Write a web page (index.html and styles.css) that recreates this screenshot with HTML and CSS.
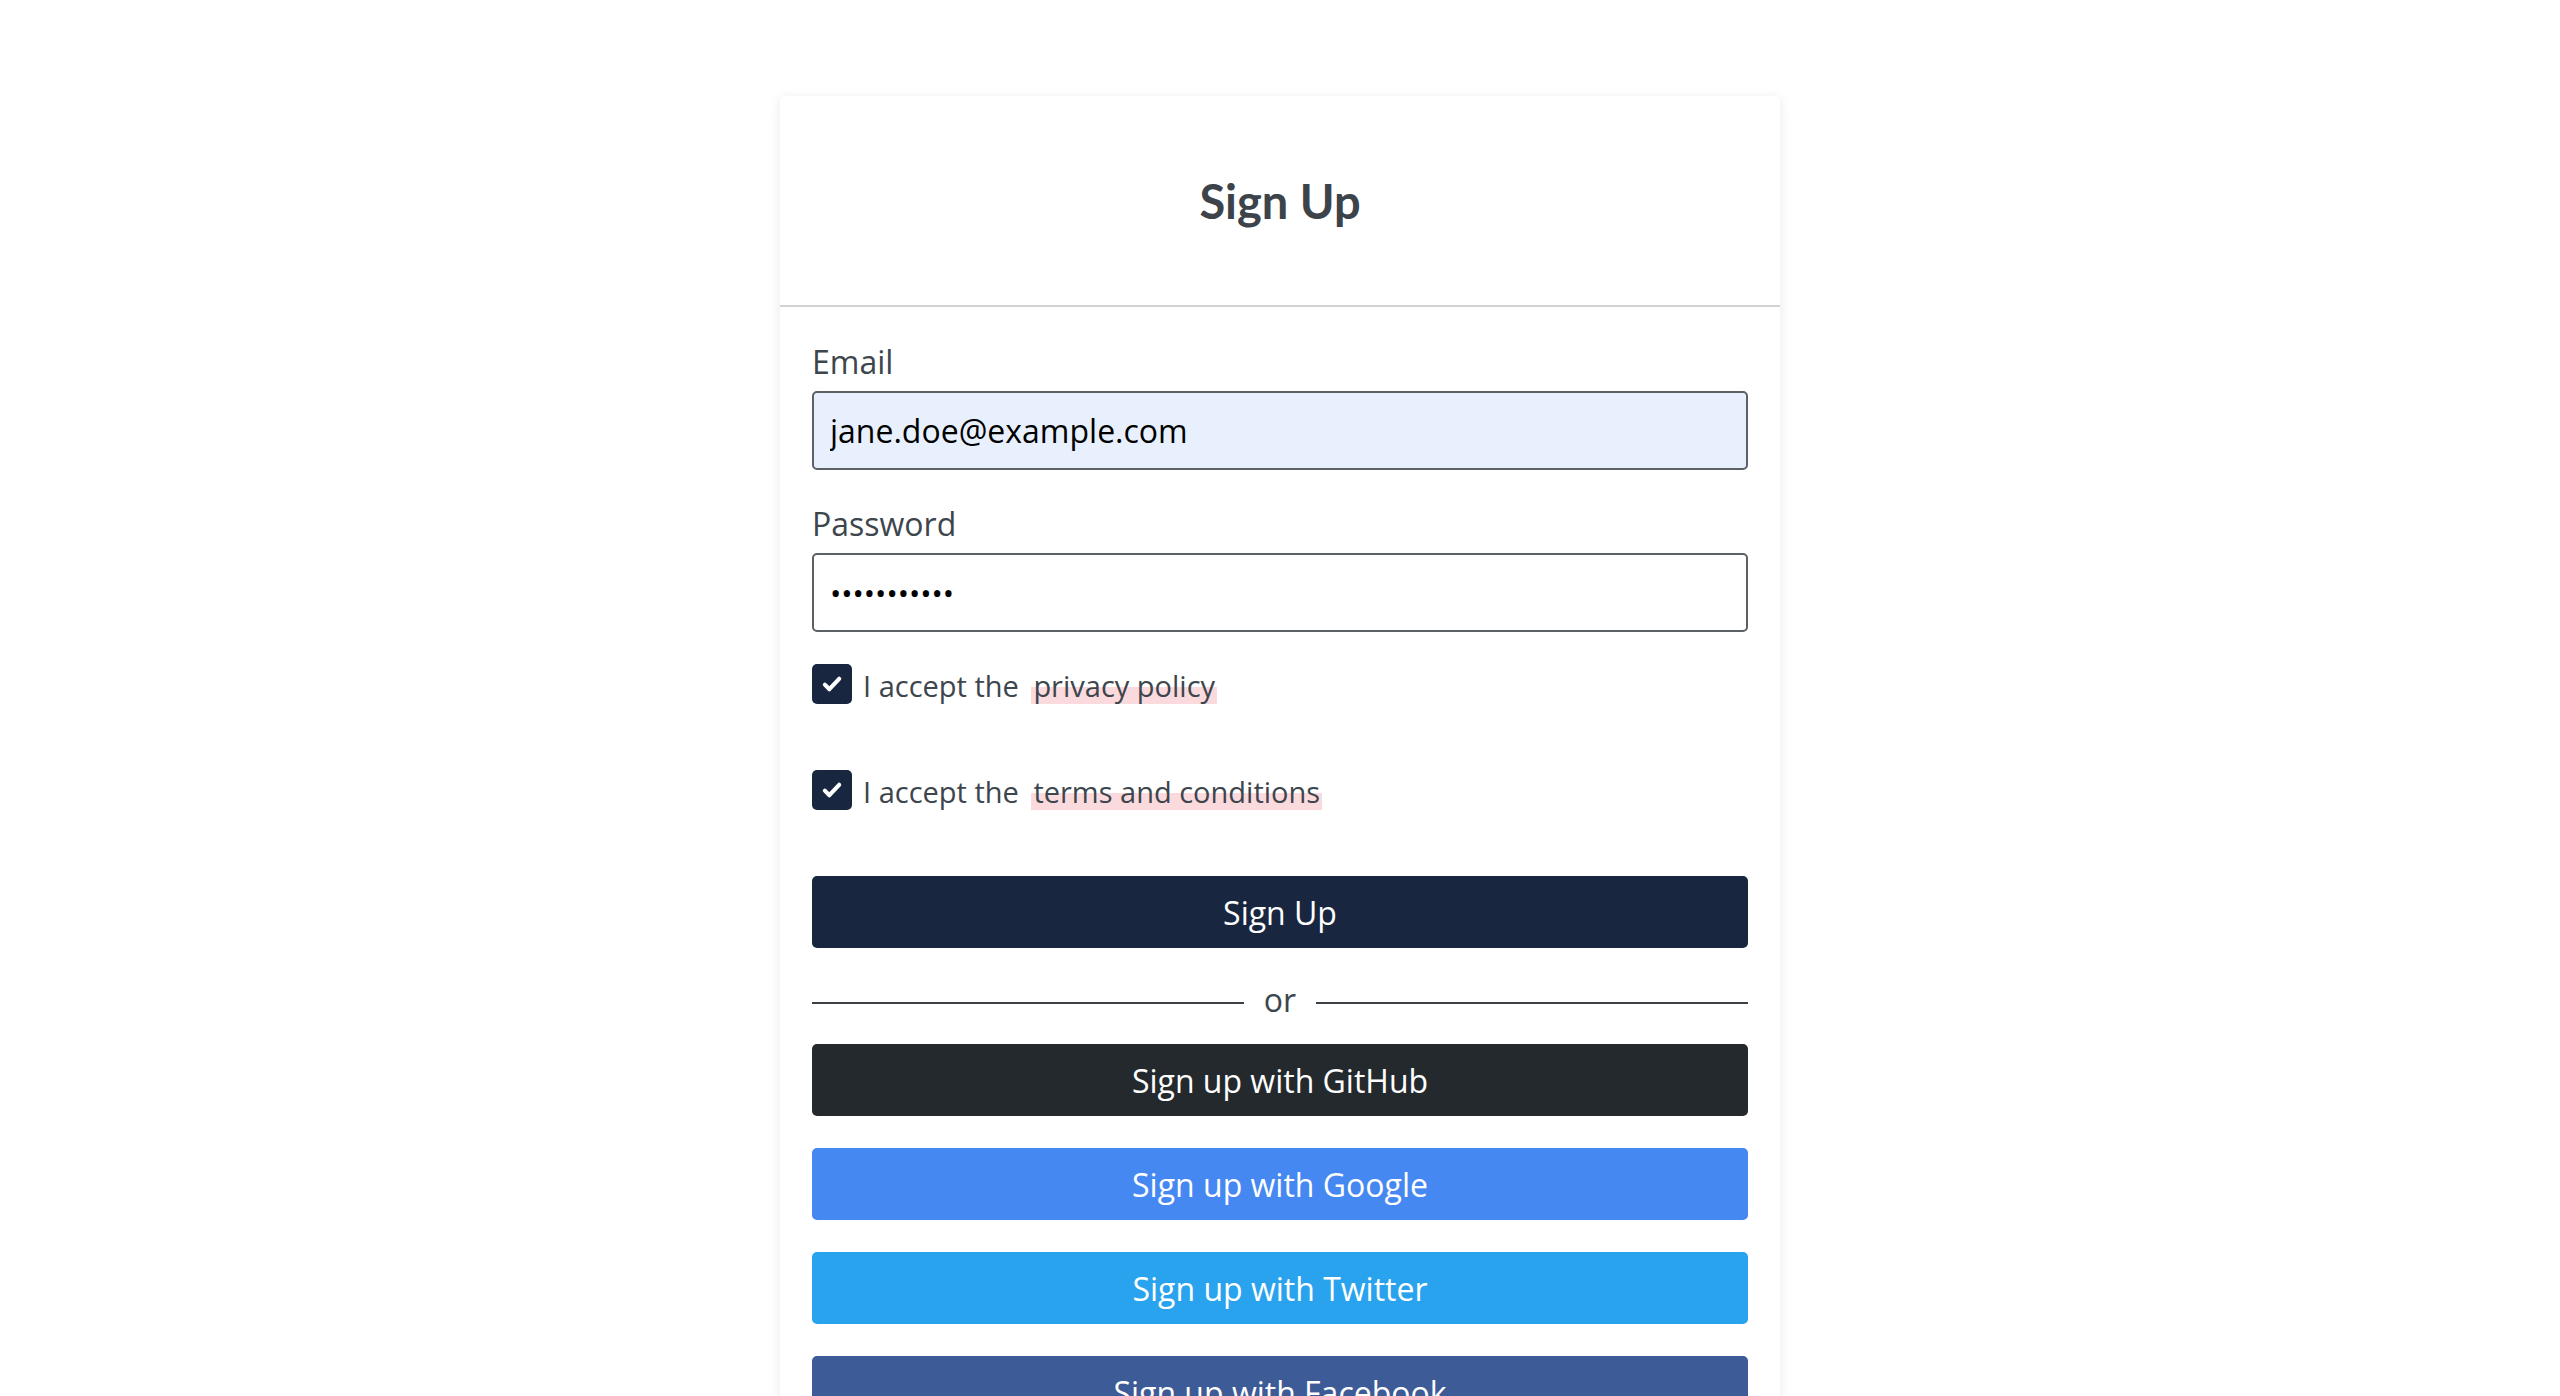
FILE: index.html
```html
<!DOCTYPE html>
<html lang="en">
<head>
    <meta charset="UTF-8">
    <meta name="viewport" content="width=device-width, initial-scale=1.0">
    <title>Sign Up</title>
    <link rel="stylesheet" href="styles.css">
</head>
<body>
    <div class="card">
        <div class="card-header">
            <h1>Sign Up</h1>
        </div>

        <form class="card-body" onsubmit="return false;">
            <div class="form-group">
                <label for="email">Email</label>
                <input type="email" id="email" class="autofilled" value="jane.doe@example.com">
            </div>

            <div class="form-group">
                <label for="password">Password</label>
                <input type="password" id="password" value="supersecret">
            </div>

            <div class="checks">
                <label class="check-row">
                    <span class="check-box">
                        <svg viewBox="0 0 20 20" width="26" height="26"><path d="M4.5 10.5l3.5 3.5 7.5-8" fill="none" stroke="#fff" stroke-width="3.2" stroke-linecap="round" stroke-linejoin="round"/></svg>
                    </span>
                    <span class="check-text">I accept the <a href="#" class="highlight">privacy policy</a></span>
                </label>

                <label class="check-row">
                    <span class="check-box">
                        <svg viewBox="0 0 20 20" width="26" height="26"><path d="M4.5 10.5l3.5 3.5 7.5-8" fill="none" stroke="#fff" stroke-width="3.2" stroke-linecap="round" stroke-linejoin="round"/></svg>
                    </span>
                    <span class="check-text">I accept the <a href="#" class="highlight">terms and conditions</a></span>
                </label>
            </div>

            <button class="btn btn-primary">Sign Up</button>

            <div class="divider"><span>or</span></div>

            <button class="btn btn-github">Sign up with GitHub</button>
            <button class="btn btn-google">Sign up with Google</button>
            <button class="btn btn-twitter">Sign up with Twitter</button>
            <button class="btn btn-facebook">Sign up with Facebook</button>
        </form>
    </div>
</body>
</html>
```

FILE: styles.css
```css
body {
    margin: 0;
    padding: 96px 0 40px;
    background-color: #fff;
    font-family: 'Open Sans', 'Noto Sans', Arial, sans-serif;
    color: #3d454d;
}
.card {
    width: 1000px;
    margin: 0 auto;
    background-color: #fff;
    border-radius: 6px;
    box-shadow: 0 2px 12px rgba(0, 0, 0, 0.09);
}
.card-header {
    height: 209px;
    display: flex;
    align-items: center;
    justify-content: center;
    border-bottom: 2px solid #d2d2d2;
}
.card-header h1 {
    margin: 0;
    font-family: Lato, 'Open Sans', sans-serif;
    font-weight: 700;
    font-size: 47px;
    color: #3c434a;
}
.card-body {
    padding: 36px 32px 40px;
}
.form-group {
    margin-bottom: 35px;
}
.form-group label {
    display: block;
    font-size: 32px;
    line-height: 37px;
    margin-bottom: 11px;
    color: #3d454d;
}
.form-group input {
    display: block;
    width: 100%;
    height: 79px;
    box-sizing: border-box;
    padding: 0 16px;
    border: 2px solid #5c6166;
    border-radius: 5px;
    font-family: 'Open Sans', Arial, sans-serif;
    font-size: 32px;
    color: #000;
    background-color: #fff;
    outline: none;
}
.form-group input.autofilled {
    background-color: #e8f0fe;
}
.form-group input[type="password"] {
    font-size: 30px;
}
.checks {
    margin-top: -3px;
}
.check-row {
    display: flex;
    align-items: center;
    height: 40px;
    margin-bottom: 66px;
    cursor: pointer;
}
.check-box {
    width: 40px;
    height: 40px;
    flex-shrink: 0;
    display: flex;
    align-items: center;
    justify-content: center;
    background-color: #18273f;
    border-radius: 5px;
}
.check-text {
    margin-left: 11px;
    padding-top: 4px;
    font-size: 29px;
    line-height: 40px;
    color: #3d454d;
}
.highlight {
    margin-left: 5px;
    padding: 0 2px;
    color: #3d454d;
    text-decoration: none;
    background: linear-gradient(to bottom, transparent 55%, #fbdadd 55%, #fbdadd 97%, transparent 97%);
}
.btn {
    display: block;
    width: 100%;
    height: 72px;
    border: none;
    border-radius: 5px;
    font-family: 'Open Sans', Arial, sans-serif;
    font-size: 32px;
    color: #fff;
    cursor: pointer;
    margin-bottom: 32px;
}
.btn-primary {
    background-color: #18273f;
    margin-bottom: 31px;
}
.btn-github {
    background-color: #24292e;
}
.btn-google {
    background-color: #4688f1;
}
.btn-twitter {
    background-color: #2aa3ef;
}
.btn-facebook {
    background-color: #3d5b97;
}
.divider {
    display: flex;
    align-items: center;
    height: 48px;
    margin-bottom: 17px;
    font-size: 32px;
    color: #3d454d;
}
.divider::before,
.divider::after {
    content: "";
    flex: 1;
    height: 2px;
    background-color: #3c4146;
}
.divider span {
    padding: 0 20px 6px;
    line-height: 42px;
}
```
